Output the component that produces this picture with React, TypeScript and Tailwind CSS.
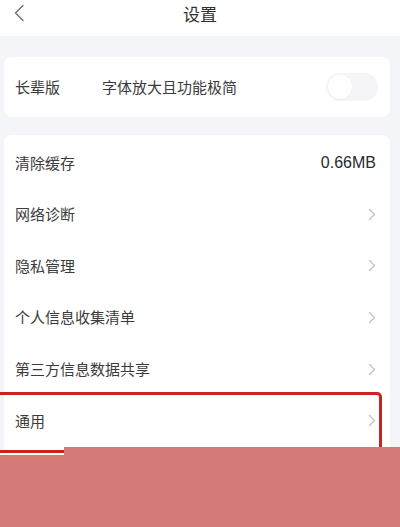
import React from "react";

const Chevron = () => (
  <svg width="8" height="13" viewBox="0 0 8 13" fill="none">
    <path d="M1.5 1.5 L6.5 6.5 L1.5 11.5" stroke="#c4c4c6" strokeWidth="1.4" strokeLinecap="round" strokeLinejoin="round" />
  </svg>
);

const rows = ["网络诊断", "隐私管理", "个人信息收集清单", "第三方信息数据共享", "通用"];

export default function App() {
  return (
    <div
      className="relative w-[400px] h-[527px] overflow-hidden bg-[#f4f5f8] text-[#3b3b3b]"
      style={{ fontFamily: '"Noto Sans CJK SC", "Liberation Sans", sans-serif' }}
    >
      <div className="relative h-[36px] bg-white flex items-center justify-center">
        <svg className="absolute left-[13px] top-[4px]" width="12" height="18" viewBox="0 0 12 18" fill="none">
          <path d="M10 1.5 L2.5 9 L10 16.5" stroke="#6b6b6b" strokeWidth="1.3" strokeLinecap="round" strokeLinejoin="round" />
        </svg>
        <span className="text-[17px] text-[#2f2f2f] -mt-[9px]">设置</span>
      </div>
      <div className="h-[21px]" />
      <div className="ml-[4px] w-[386px] h-[60px] bg-white rounded-lg flex items-center pl-[11px] pr-[12px]">
        <span className="text-[15px] w-[87px]">长辈版</span>
        <span className="text-[15px] flex-1">字体放大且功能极简</span>
        <div className="relative w-[52px] h-[28px] rounded-full bg-[#f5f5f7]">
          <div className="absolute left-[2px] top-[2px] w-[24px] h-[24px] rounded-full bg-white shadow-[0_1px_2px_rgba(0,0,0,0.04)]" />
        </div>
      </div>
      <div className="h-[18px]" />
      <div className="ml-[4px] w-[386px] bg-white rounded-lg pt-[2px] pb-[20px]">
        <div className="h-[51.6px] flex items-center justify-between pl-[11px] pr-[14px]">
          <span className="text-[15px]">清除缓存</span>
          <span className="text-[16px] text-[#2a2a2a]" style={{ fontFamily: '"Liberation Sans", Arial, sans-serif' }}>0.66MB</span>
        </div>
        {rows.map((r) => (
          <div key={r} className="h-[51.6px] flex items-center justify-between pl-[11px] pr-[14px]">
            <span className="text-[15px]">{r}</span>
            <Chevron />
          </div>
        ))}
      </div>
      <div className="absolute left-[-3px] top-[392px] w-[385px] h-[61px] border-[3px] border-[#c8241d] rounded-tr-[5px]" />
      <div className="absolute left-0 top-[453px] w-[64px] h-[2px] bg-white" />
      <div className="absolute left-[64px] top-[447px] right-0 bottom-0 bg-[#d37a76]" />
      <div className="absolute left-0 top-[455px] right-0 bottom-0 bg-[#d37a76]" />
    </div>
  );
}
